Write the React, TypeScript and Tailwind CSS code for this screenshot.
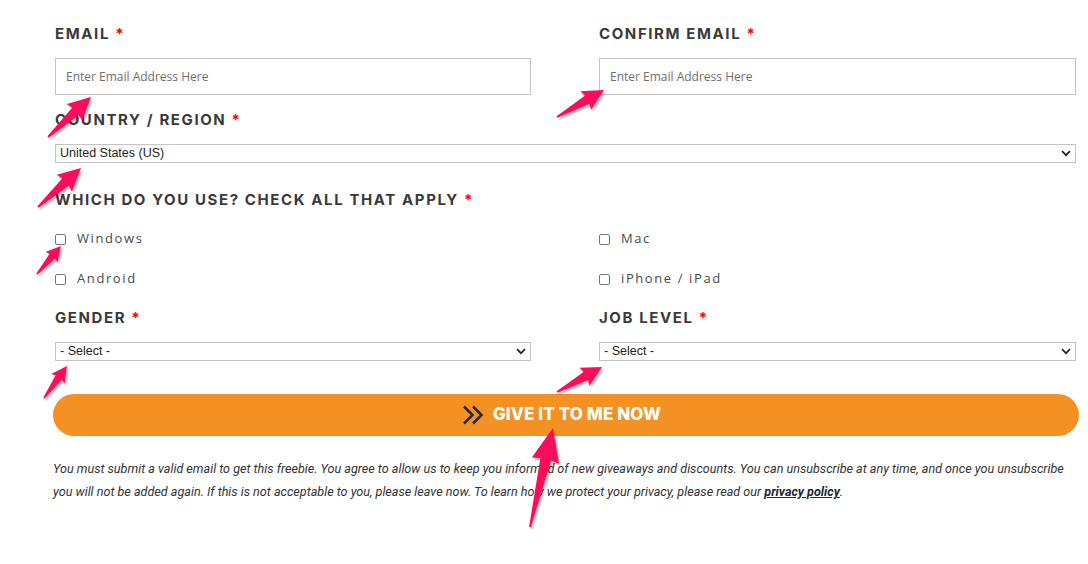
import React from "react";

type Pt = [number, number];

function arrowPoints(tail: Pt, tip: Pt): string {
  const [x1, y1] = tail;
  const [x2, y2] = tip;
  const dx = x2 - x1;
  const dy = y2 - y1;
  const L = Math.hypot(dx, dy);
  const ux = dx / L;
  const uy = dy / L;
  const nx = -uy;
  const ny = ux;
  const headLen = Math.min(0.36 * L, 32);
  const headHalf = Math.min(0.16 * L + 2, 14);
  const shaftHalf = Math.min(0.06 * L + 1.4, 5.5);
  const tailHalf = 0.9;
  const bx = x2 - ux * headLen;
  const by = y2 - uy * headLen;
  const pts: Pt[] = [
    [x1 + nx * tailHalf, y1 + ny * tailHalf],
    [bx + nx * shaftHalf, by + ny * shaftHalf],
    [bx + nx * headHalf - ux * 1.5, by + ny * headHalf - uy * 1.5],
    [x2, y2],
    [bx - nx * headHalf - ux * 1.5, by - ny * headHalf - uy * 1.5],
    [bx - nx * shaftHalf, by - ny * shaftHalf],
    [x1 - nx * tailHalf, y1 - ny * tailHalf],
  ];
  return pts.map((p) => `${p[0].toFixed(1)},${p[1].toFixed(1)}`).join(" ");
}

const arrows: [Pt, Pt][] = [
  [[48, 137], [91, 97]],
  [[38, 207], [81, 168]],
  [[557, 117], [604, 90]],
  [[37, 274], [61, 246]],
  [[44, 398], [67, 366]],
  [[557, 392], [602, 367]],
  [[530, 527], [553, 428]],
];

function Label({ children }: { children: React.ReactNode }) {
  return (
    <div className="font-['Inter',sans-serif] text-[15px] leading-[20px] font-bold tracking-[1.6px] text-[#3a3a3a]">
      {children} <span className="text-[#ff0000] tracking-normal">*</span>
    </div>
  );
}

function Chevron() {
  return (
    <svg width="10" height="7" viewBox="0 0 10 7" className="shrink-0">
      <path d="M1 1.2 L5 5.2 L9 1.2" fill="none" stroke="#222" strokeWidth="1.7" />
    </svg>
  );
}

function FakeSelect({ value, h }: { value: string; h: string }) {
  return (
    <div
      className={`flex items-center justify-between border border-[#c4c4c4] bg-white pl-[4px] pr-[4px] ${h} font-['Liberation_Sans',Arial,sans-serif] text-[12.5px] text-[#222]`}
    >
      <span>{value}</span>
      <Chevron />
    </div>
  );
}

function EmailInput() {
  return (
    <div className="flex h-[37px] items-center border border-[#c4c4c4] bg-white pl-[10px] font-['Open_Sans',sans-serif] text-[12px] text-[#6f6f6f]">
      Enter Email Address Here
    </div>
  );
}

function Check({ label }: { label: string }) {
  return (
    <div className="flex h-[20px] items-center">
      <div className="h-[11px] w-[11px] rounded-[2px] border border-[#777] bg-white" />
      <span className="ml-[11px] font-['Open_Sans',sans-serif] text-[13px] tracking-[1.6px] text-[#4a4a4a]">
        {label}
      </span>
    </div>
  );
}

export default function App() {
  return (
    <div className="relative h-[564px] w-[1088px] overflow-hidden bg-white">
      <div className="pl-[55px] pt-[24px]">
        <div className="w-[1021px]">
          <div className="grid grid-cols-[476px_477px] gap-x-[68px]">
            <div>
              <Label>EMAIL</Label>
              <div className="mt-[14px]">
                <EmailInput />
              </div>
            </div>
            <div>
              <Label>CONFIRM EMAIL</Label>
              <div className="mt-[14px]">
                <EmailInput />
              </div>
            </div>
          </div>

          <div className="mt-[15px]">
            <Label>COUNTRY / REGION</Label>
            <div className="mt-[14px]">
              <FakeSelect value="United States (US)" h="h-[19px]" />
            </div>
          </div>

          <div className="mt-[27px]">
            <Label>WHICH DO YOU USE? CHECK ALL THAT APPLY</Label>
            <div className="mt-[19px] grid grid-cols-[476px_477px] gap-x-[68px] gap-y-[20px]">
              <Check label="Windows" />
              <Check label="Mac" />
              <Check label="Android" />
              <Check label="iPhone / iPad" />
            </div>
          </div>

          <div className="mt-[19px] grid grid-cols-[476px_477px] gap-x-[68px]">
            <div>
              <Label>GENDER</Label>
              <div className="mt-[14px]">
                <FakeSelect value="- Select -" h="h-[19px]" />
              </div>
            </div>
            <div>
              <Label>JOB LEVEL</Label>
              <div className="mt-[14px]">
                <FakeSelect value="- Select -" h="h-[19px]" />
              </div>
            </div>
          </div>
        </div>

        <div className="-ml-[2px] mt-[33px] w-[1026px]">
          <div className="flex h-[42px] items-center justify-center rounded-full bg-[#f39223] pr-[10px]">
            <svg width="26" height="24" viewBox="0 0 26 24" className="mr-[6px]">
              <path d="M3 3.5 L11.5 12 L3 20.5" fill="none" stroke="#2a2a2a" strokeWidth="2.6" />
              <path d="M12 3.5 L20.5 12 L12 20.5" fill="none" stroke="#2a2a2a" strokeWidth="2.6" />
            </svg>
            <span className="font-['Inter',sans-serif] text-[17px] font-extrabold tracking-[0.1px] text-white">
              GIVE IT TO ME NOW
            </span>
          </div>

          <p className="mt-[21px] font-['Roboto',sans-serif] text-[12.6px] italic leading-[23px] text-[#333]">
            You must submit a valid email to get this freebie. You agree to allow us to keep you informed of new giveaways and discounts. You can unsubscribe at any time, and once you unsubscribe
            <br />
            you will not be added again. If this is not acceptable to you, please leave now. To learn how we protect your privacy, please read our{" "}
            <span className="font-bold text-[#1c2836] underline">privacy policy</span>.
          </p>
        </div>
      </div>

      <svg
        className="pointer-events-none absolute left-0 top-0"
        width="1088"
        height="564"
        viewBox="0 0 1088 564"
      >
        <defs>
          <filter id="sh" x="-20%" y="-20%" width="140%" height="140%">
            <feDropShadow dx="1.5" dy="2" stdDeviation="1.2" floodColor="#000" floodOpacity="0.3" />
          </filter>
        </defs>
        {arrows.map(([t, h], i) => (
          <polygon key={i} points={arrowPoints(t, h)} fill="#fb0f5c" filter="url(#sh)" />
        ))}
      </svg>
    </div>
  );
}
